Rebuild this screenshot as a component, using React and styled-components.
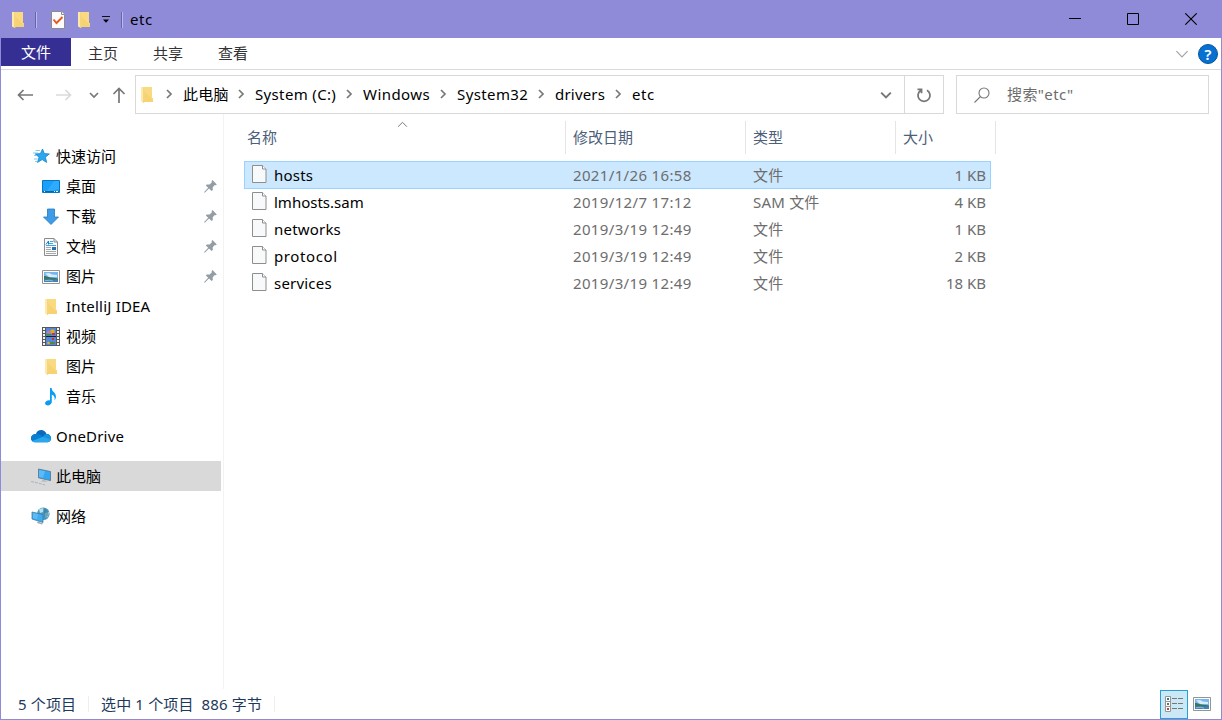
import React from 'react'
import styled, { createGlobalStyle } from 'styled-components'

const crumbs = [
    { name: '此电脑', width: 46, spacing: 0.3 },
    { name: 'System (C:)', width: 82, spacing: 0.35 },
    { name: 'Windows', width: 68, spacing: 0.45 },
    { name: 'System32', width: 72, spacing: 0.4 },
    { name: 'drivers', width: 51, spacing: 0.2 },
    { name: 'etc', width: 24, spacing: 0.6 },
]

const files = [
    { name: 'hosts', date: '2021/1/26 16:58', type: '文件', size: '1 KB', selected: true },
    { name: 'lmhosts.sam', date: '2019/12/7 17:12', type: 'SAM 文件', size: '4 KB', spacing: 0 },
    { name: 'networks', date: '2019/3/19 12:49', type: '文件', size: '1 KB' },
    { name: 'protocol', date: '2019/3/19 12:49', type: '文件', size: '2 KB', spacing: 0.6 },
    { name: 'services', date: '2019/3/19 12:49', type: '文件', size: '18 KB' },
]

const FolderIcon = () => (
    <svg width="14" height="18" viewBox="0 0 14 18">
        <path d="M3 1h9v11h1v4H3z" fill="#f6d273" />
        <path d="M4 1h8v11h1v2L4 5z" fill="#fbdf8b" opacity=".6" />
        <path d="M1 1h2.2l1 1.6V17.3L1 15.6z" fill="#fde9a9" />
        <path d="M4.2 2.5v14.8L3 16.6V1z" fill="#f3cb68" opacity=".7" />
    </svg>
)

const CheckDocIcon = () => (
    <svg width="14" height="18" viewBox="0 0 14 18">
        <path d="M.5.5h10l3 3v14H.5z" fill="#fbfbfb" stroke="#8c8c8c" />
        <path d="M10.5.5v3h3" fill="#fff" stroke="#8c8c8c" />
        <path d="M2.5 8.5l3 3.5L11.5 6" fill="none" stroke="#e8571c" strokeWidth="1.9" />
    </svg>
)

const FileIcon = () => (
    <svg width="15" height="18" viewBox="0 0 15 18">
        <path d="M.5.5h10l3.5 3.5v13.5H.5z" fill="#f8f9fa" stroke="#8e8e8e" />
        <path d="M10.5.5v3.5h3.5" fill="#fff" stroke="#8e8e8e" />
    </svg>
)

const PinIcon = () => (
    <svg width="13" height="13" viewBox="0 0 13 13" fill="#929da6">
        <path d="M8.5 0L12.8 4.4 11.7 5.3 10.8 5 8.7 7.2 8.8 10 7.6 11 5 8.6 1 12.4 0 12.6.4 11.7 4.2 7.8 1.8 5.4 2.8 4.4 5.6 4.4 7.9 2.2 7.6 1z" />
    </svg>
)

const StarIcon = () => (
    <svg width="20" height="18" viewBox="0 0 20 18">
        <path d="M11.5 2l1.8 4.6 5 .3-3.9 3.3 1.3 5.2-4.5-2.8-4.7 2.8 1.6-5.2-3.9-3.3 5.2-.3z" fill="#2ba7ef" stroke="#1286c8" strokeWidth=".8" />
        <path d="M4.5 3.5H9M2 6h5M3 8.5h3M3 12h3.5M4 14.5h2" stroke="#63bdec" strokeWidth=".8" />
    </svg>
)

const DesktopIcon = () => (
    <svg width="18" height="14" viewBox="0 0 18 14">
        <path d="M.5.5h17v12H.5z" fill="#18a0fb" stroke="#0876bf" />
        <path d="M12 1h5v8L4 12z" fill="#43b5ff" opacity=".55" />
        <path d="M1 11.5h16" stroke="#0768a6" />
        <path d="M2 11.5h1M12 11.5h1M14 11.5h2" stroke="#e7f5ff" />
    </svg>
)

const DownloadIcon = () => (
    <svg width="18" height="18" viewBox="0 0 18 18">
        <path d="M5.5 1h7v8h4L9 16.5 1.5 9h4z" fill="#3e9be8" stroke="#2678bd" strokeWidth=".8" />
    </svg>
)

const DocumentIcon = () => (
    <svg width="16" height="18" viewBox="0 0 16 18">
        <path d="M1.5.5h9.5l3.5 3.5v13.5h-13z" fill="#fafafa" stroke="#8b8b8b" />
        <path d="M11 .5V4h3.5" fill="none" stroke="#8b8b8b" />
        <path d="M7 3.5h3M6 5.5h4M3 7.5h10" stroke="#38a7e7" />
        <path d="M3 6.5L5.5 3v3.5" fill="none" stroke="#187fc0" />
        <path d="M3 9.5h5M3 11.5h5M3 13.5h10M3 15.5h10" stroke="#a3a9ad" />
        <path d="M9 9h4v3H9z" fill="#2574b0" />
    </svg>
)

const PictureIcon = () => (
    <svg width="18" height="14" viewBox="0 0 18 14">
        <path d="M.5.5h17v13H.5z" fill="#fff" stroke="#949494" />
        <path d="M2 2h14v6H2z" fill="#78b6ee" />
        <path d="M3 3.5l4-.5 3 1.5 5 .5v2H7z" fill="#d8ecfc" />
        <path d="M2 6c3 0 5 2 14 2.3V10H2z" fill="#3a7565" />
        <path d="M2 9.5h14V12H2z" fill="#4383bb" />
        <path d="M3 10.7l5-.5 3 1" fill="none" stroke="#8ebddd" />
    </svg>
)

const VideoIcon = () => (
    <svg width="18" height="20" viewBox="0 0 18 20">
        <path d="M0 0h18v19H0z" fill="#56595c" />
        <path d="M2 1v18M16 1v18" stroke="#f5f5f5" strokeWidth="2" strokeDasharray="2 1" />
        <path d="M4 1h10v8H4zM4 10h10v8H4z" fill="#5687dd" />
        <path d="M4 9.5h10" stroke="#18212b" />
        <path d="M4 6l3-3 2 4z" fill="#c67aa0" />
        <circle cx="10.5" cy="4.5" r="2.2" fill="#dcae1d" />
        <path d="M10 7h3M10 12h2" stroke="#cf352b" strokeWidth="2" />
        <path d="M4 7h5v1.5H4M8 15h5v2H8" fill="#488d3e" />
        <circle cx="6.5" cy="16" r="1.3" fill="#ddb62c" />
    </svg>
)

const MusicIcon = () => (
    <svg width="14" height="18" viewBox="0 0 14 18">
        <path d="M6 0h1.6c0 4 5 4.2 4.3 9.8-.3 1-1 2-1.5 2.6.8-2.6.1-4.8-2.6-6v7.8C7.4 16 5.5 17.4 3.7 17.4c-2 0-3.1-1.2-2.5-2.8.5-1.7 2.8-2.8 4.8-2.2z" fill="#0a9bf5" />
    </svg>
)

const OneDriveIcon = () => (
    <svg width="20" height="14" viewBox="0 0 20 14">
        <path d="M5 5C6 .3 13.3-.8 15.6 5 18.5 5 20 7 20 9.4c0 2.4-1.5 3.8-3.7 3.8H4C1.7 13.2 0 11.5 0 9.2S2 5 5 5z" fill="#0869bd" />
        <path d="M5 5c4-.3 6 2.1 9 3.7l-10 4.4C1.2 12.7 0 11 0 9.2S1.7 5.2 5 5z" fill="#087ed4" />
        <path d="M12 8c1.3-2.4 2.3-3 3.6-3C18.5 5 20 7 20 9.4l-1 2.4z" fill="#1495e2" />
        <path d="M1.2 12L12 7.8l7.7 3c-.6 1.6-1.8 2.4-3.4 2.4H4c-1.1 0-2-.4-2.8-1.2z" fill="#28a8ec" />
    </svg>
)

const ComputerIcon = () => (
    <svg width="20" height="18" viewBox="0 0 20 18">
        <path d="M7.5 1l12 2.6v9l-12-2.8z" fill="#35a7f2" stroke="#52758e" strokeWidth=".8" />
        <path d="M8 2l6 1.3-2 6.5-4-.9z" fill="#70c5fa" opacity=".65" />
        <path d="M12 12l-2 1.5 6.5.3-2-1.2z" fill="#adb6bd" />
        <path d="M0 13.5l6 1.3 5 1.2 3 1" fill="none" stroke="#b3b6b8" strokeWidth="1.1" strokeDasharray="3 1" />
    </svg>
)

const NetworkIcon = () => (
    <svg width="20" height="18" viewBox="0 0 20 18">
        <circle cx="12.3" cy="6.7" r="6.3" fill="#4b9abf" />
        <path d="M8 2l5-1-1 4-3 1zM14 6l4-1-1 5-3 1z" fill="#b9dfec" />
        <path d="M12 1c4 1 6 4 5 8l-3 3z" fill="#397d9f" opacity=".6" />
        <path d="M1 5l11 2.5v8L1 12z" fill="#3cacf4" stroke="#477996" strokeWidth=".8" />
        <path d="M2 6l5 1.2-1 5-4-1z" fill="#78cafb" opacity=".5" />
        <path d="M7 14l-1 2 5 1.5 1-1-3-1z" fill="#9ea8ae" />
    </svg>
)

const Chevron = ({ dir = 'right', size = 7, color = '#777', weight = 1.5 }) => {
    const paths = { right: 'M3 1l4 4-4 4', down: 'M1 3l4 4 4-4', up: 'M1 7l4-4 4 4' }
    return (
        <svg width={size} height={size} viewBox="0 0 10 10">
            <path d={paths[dir]} fill="none" stroke={color} strokeWidth={weight} vectorEffect="non-scaling-stroke" />
        </svg>
    )
}

const Arrow = ({ color = '#777', up }) => (
    <svg width="16" height="16" viewBox="0 0 16 16" fill="none" stroke={color} strokeWidth="1.7">
        <path d={up ? 'M8 16V1.5M2.5 7L8 1.5 13.5 7' : 'M16 8H1.5M6.5 3l-5 5 5 5'} />
    </svg>
)

const ForwardArrow = () => (
    <svg width="16" height="16" viewBox="0 0 16 16" fill="none" stroke="#dadada" strokeWidth="1.7">
        <path d="M0 8h14.5M9.5 3l5 5-5 5" />
    </svg>
)

const places = [
    { name: '桌面', icon: DesktopIcon, pinned: true },
    { name: '下载', icon: DownloadIcon, pinned: true },
    { name: '文档', icon: DocumentIcon, pinned: true },
    { name: '图片', icon: PictureIcon, pinned: true },
    { name: 'IntelliJ IDEA', icon: FolderIcon },
    { name: '视频', icon: VideoIcon },
    { name: '图片', icon: FolderIcon },
    { name: '音乐', icon: MusicIcon },
]

const roots = [
    { name: 'OneDrive', icon: OneDriveIcon },
    { name: '此电脑', icon: ComputerIcon, active: true },
    { name: '网络', icon: NetworkIcon },
]

const App = () => {
    return (
        <Window>
            <GlobalStyle />
            <TitleBar>
                <QuickTools>
                    <FolderIcon />
                    <ToolLine />
                    <CheckDocIcon />
                    <FolderIcon />
                    <svg width="8" height="8" viewBox="0 0 8 8">
                        <path d="M0 .5h8" stroke="#111" />
                        <path d="M1 3.5h6L4 6.7z" fill="#000" />
                    </svg>
                    <ToolLine />
                </QuickTools>
                <Title>etc</Title>
                <Controls>
                    <svg width="12" height="12"><path d="M0 5.5h12" stroke="#000" /></svg>
                    <svg width="12" height="12"><path d="M.5.5h11v11H.5z" fill="none" stroke="#000" /></svg>
                    <svg width="12" height="12"><path d="M.3.3l11.4 11.4M11.7.3L.3 11.7" stroke="#000" strokeWidth="1.1" /></svg>
                </Controls>
            </TitleBar>
            <Ribbon>
                <FileTab>文件</FileTab>
                <Tab>主页</Tab>
                <Tab>共享</Tab>
                <Tab>查看</Tab>
                <RibbonEnd>
                    <Chevron dir="down" size={14} color="#a5a5a5" weight={1.2} />
                    <Help>?</Help>
                </RibbonEnd>
            </Ribbon>
            <Navigation>
                <NavButtons>
                    <Arrow />
                    <ForwardArrow />
                    <Chevron dir="down" size={10} weight={1.7} />
                    <Arrow up />
                </NavButtons>
                <Address>
                    <FolderIcon />
                    <Crumbs>
                        {crumbs.map((crumb) => (
                            <React.Fragment key={crumb.name}>
                                <CrumbArrow><Chevron size={10} weight={1.7} /></CrumbArrow>
                                <Crumb $width={crumb.width} $spacing={crumb.spacing}>{crumb.name}</Crumb>
                            </React.Fragment>
                        ))}
                    </Crumbs>
                    <AddressDrop><Chevron dir="down" size={12} weight={2} /></AddressDrop>
                    <Refresh>
                        <svg width="16" height="16" viewBox="0 0 16 16" fill="none" stroke="#777" strokeWidth="1.8">
                            <path d="M11 3.2A6 6 0 1 1 5 3.2M1.5 2.3h4v4" />
                        </svg>
                    </Refresh>
                </Address>
                <Search>
                    <svg width="16" height="16" viewBox="0 0 16 16" fill="none" stroke="#777" strokeWidth="1.1">
                        <circle cx="10" cy="6" r="5" />
                        <path d="M6.5 9.5L.5 15.5" />
                    </svg>
                    <SearchText>搜索"etc"</SearchText>
                </Search>
            </Navigation>
            <Body>
                <Sidebar>
                    <Place><IconBox><StarIcon /></IconBox><PlaceName>快速访问</PlaceName></Place>
                    {places.map(({ name, icon: Icon, pinned }, i) => (
                        <Place key={i} $nested>
                            <IconBox $drop={1}><Icon /></IconBox>
                            <PlaceName $latin={name === 'IntelliJ IDEA'}>{name}</PlaceName>
                            {pinned && <Pin><PinIcon /></Pin>}
                        </Place>
                    ))}
                    {roots.map(({ name, icon: Icon, active }) => (
                        <Root key={name} $active={active}>
                            <IconBox $drop={active ? 2 : 0}><Icon /></IconBox>
                            <PlaceName $latin={name === 'OneDrive'}>{name}</PlaceName>
                        </Root>
                    ))}
                </Sidebar>
                <Content>
                    <Header>
                        <HeaderCell>
                            名称
                            <SortMark><Chevron dir="up" size={11} color="#777" weight={1} /></SortMark>
                        </HeaderCell>
                        <HeaderCell>修改日期</HeaderCell>
                        <HeaderCell>类型</HeaderCell>
                        <HeaderCell>大小</HeaderCell>
                    </Header>
                    {files.map((file) => (
                        <FileRow key={file.name} $selected={file.selected}>
                            <FileName $spacing={file.spacing}><FileIcon />{file.name}</FileName>
                            <FileDate>{file.date}</FileDate>
                            <FileType>{file.type}</FileType>
                            <FileSize>{file.size}</FileSize>
                        </FileRow>
                    ))}
                </Content>
            </Body>
            <StatusBar>
                <Count>5 个项目</Count>
                <Chosen><span>选中 1 个项目</span><span>886 字节</span></Chosen>
                <Views>
                    <DetailsButton>
                        <svg width="18" height="17" viewBox="0 0 18 17">
                            <path d="M.5.5h5v5h-5zM.5 5.5h5v5h-5zM.5 10.5h5v5h-5z" fill="#fff" stroke="#949494" />
                            <path d="M7 2.5h5M13 2.5h5M7 7.5h5M13 7.5h5M7 12.5h5M13 12.5h5" stroke="#777" />
                            <path d="M2 2h2v2H2z" fill="#267f83" />
                            <path d="M2 7h2v2H2z" fill="#7c6b54" />
                            <path d="M2 12h2v2H2z" fill="#d43c20" />
                        </svg>
                    </DetailsButton>
                    <PictureIcon />
                </Views>
            </StatusBar>
        </Window>
    )
}

export default App

const GlobalStyle = createGlobalStyle`
* {
    box-sizing: border-box;
}
body {
    margin: 0;
    overflow: hidden;
}
svg {
    display: block;
    flex-shrink: 0;
}
`
const Window = styled.div`
display: flex;
flex-direction: column;
width: 1222px;
height: 720px;
border: 1px solid #8f8bd8;
border-top: 0;
background: #fff;
color: #000;
font-family: "Noto Sans", "Noto Sans CJK SC", sans-serif;
font-size: 15px;
white-space: nowrap;
`
const TitleBar = styled.div`
display: flex;
align-items: center;
height: 38px;
flex-shrink: 0;
padding-left: 10px;
background: #8f8bd8;
`
const QuickTools = styled.div`
display: grid;
grid-template-columns: 14px 22px 22px 29px 15px 17px;
align-items: center;
width: 119px;
justify-items: center;
padding-top: 2px;
`
const ToolLine = styled.div`
width: 2px;
height: 16px;
background: #68659f;
border-right: 1px solid #bbb9ed;
`
const Title = styled.div`
line-height: 38px;
letter-spacing: 0.5px;
`
const Controls = styled.div`
display: flex;
gap: 46px;
margin-left: auto;
padding-right: 24px;
`
const Ribbon = styled.div`
display: flex;
height: 32px;
flex-shrink: 0;
border-bottom: 1px solid #dadbdc;
color: #333;
`
const FileTab = styled.div`
width: 70px;
height: 28px;
line-height: 29px;
text-align: center;
background: #352f94;
color: #fff;
`
const Tab = styled.div`
width: 65px;
line-height: 30px;
padding-right: 1px;
text-align: center;
`
const RibbonEnd = styled.div`
display: flex;
align-items: center;
gap: 9px;
margin-left: auto;
padding-right: 3px;
`
const Help = styled.div`
width: 20px;
height: 20px;
border: 1px solid #07579b;
border-radius: 50%;
background: #0870d1;
color: #fff;
font-size: 15px;
font-weight: 600;
line-height: 18px;
text-align: center;
`
const Navigation = styled.div`
display: flex;
height: 44px;
flex-shrink: 0;
padding-top: 5px;
`
const NavButtons = styled.div`
display: grid;
grid-template-columns: 39px 33px 22px 16px;
align-items: center;
width: 134px;
padding: 1px 0 0 16px;
`
const Address = styled.div`
display: flex;
align-items: center;
width: 809px;
height: 39px;
border: 1px solid #d9d9d9;
padding-left: 4px;
`
const Crumbs = styled.div`
display: flex;
align-items: center;
flex: 1;
padding-left: 3px;
`
const CrumbArrow = styled.div`
display: flex;
justify-content: center;
width: 26px;
padding: 0 2px 1px 0;
`
const Crumb = styled.div`
width: ${(props) => props.$width}px;
letter-spacing: ${(props) => props.$spacing}px;
padding-bottom: 2px;
`
const AddressDrop = styled.div`
width: 24px;
`
const Refresh = styled.div`
display: flex;
align-items: center;
justify-content: center;
width: 39px;
height: 37px;
border-left: 1px solid #d9d9d9;
`
const Search = styled.div`
display: flex;
align-items: center;
gap: 17px;
width: 253px;
height: 39px;
margin-left: 12px;
padding-left: 17px;
border: 1px solid #d9d9d9;
color: #6d6d6d;
`
const SearchText = styled.div`
padding-bottom: 2px;
letter-spacing: 0.4px;
`
const Body = styled.div`
display: flex;
flex: 1;
min-height: 0;
`
const Sidebar = styled.div`
width: 223px;
padding-top: 27px;
border-right: 1px solid #f3f3f3;
`
const Place = styled.div`
display: flex;
align-items: center;
width: 220px;
height: 30px;
padding-left: ${(props) => (props.$nested ? 40 : 30)}px;
`
const Root = styled(Place)`
margin-top: 10px;
background: ${(props) => (props.$active ? '#d9d9d9' : 'transparent')};
`
const IconBox = styled.div`
display: flex;
justify-content: center;
width: 20px;
margin-right: 5px;
padding-top: ${(props) => props.$drop || 0}px;
`
const PlaceName = styled.div`
padding-bottom: ${(props) => (props.$latin ? 0 : 2)}px;
letter-spacing: ${(props) => (props.$latin ? 0.2 : 0)}px;
`
const Pin = styled.div`
margin-left: auto;
margin-right: 4px;
`
const Content = styled.div`
width: 772px;
padding: 7px 0 0 20px;
`
const Header = styled.div`
display: grid;
grid-template-columns: 322px 180px 150px 100px;
height: 33px;
margin-bottom: 7px;
color: #4c607a;
`
const HeaderCell = styled.div`
position: relative;
padding-left: 7px;
line-height: 33px;
border-right: 1px solid #e5e5e5;
&:first-child {
    padding-left: 3px;
}
`
const SortMark = styled.div`
position: absolute;
left: 153px;
top: -2px;
`
const FileRow = styled.div`
display: grid;
grid-template-columns: 328px 180px 130px 103px;
align-items: center;
width: 747px;
height: 28px;
margin-bottom: -1px;
border: 1px solid ${(props) => (props.$selected ? '#99d1ff' : 'transparent')};
background: ${(props) => (props.$selected ? '#cce8ff' : 'transparent')};
color: #6d6d6d;
`
const FileName = styled.div`
display: flex;
align-items: center;
gap: 7px;
padding-left: 7px;
color: #000;
letter-spacing: ${(props) => props.$spacing ?? 0.2}px;
svg {
    margin-top: -2px;
}
`
const FileDate = styled.div`
letter-spacing: 0.35px;
`
const FileType = styled.div`
padding-bottom: 2px;
letter-spacing: 0.2px;
`
const FileSize = styled.div`
text-align: right;
`
const StatusBar = styled.div`
display: flex;
align-items: center;
height: 30px;
flex-shrink: 0;
padding-left: 17px;
color: #1e395b;
`
const Count = styled.div`
width: 71px;
border-right: 1px solid #eee;
line-height: 16px;
letter-spacing: 0.15px;
`
const Chosen = styled.div`
display: flex;
gap: 8px;
width: 186px;
padding-left: 12px;
border-right: 1px solid #eee;
line-height: 16px;
letter-spacing: 0.15px;
`
const Views = styled.div`
display: flex;
align-items: center;
gap: 5px;
margin-left: auto;
padding-right: 10px;
`
const DetailsButton = styled.div`
display: flex;
align-items: center;
justify-content: center;
width: 28px;
height: 29px;
border: 1px solid #26a0da;
background: #cbe8f6;
`
